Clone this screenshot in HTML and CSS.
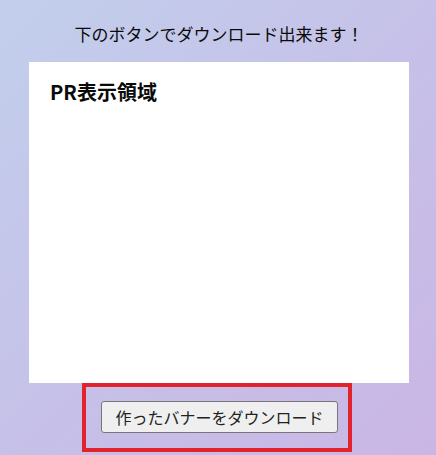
FILE: index.html
```html
<!DOCTYPE html>
<html lang="ja">
<head>
<meta charset="utf-8">
<link rel="stylesheet" href="styles.css">
</head>
<body>
<div class="page">
  <p class="title">下のボタンでダウンロード出来ます！</p>
  <div class="banner">
    <h2 class="banner-title">PR表示領域</h2>
  </div>
  <div class="highlight">
    <button class="download">作ったバナーをダウンロード</button>
  </div>
</div>
</body>
</html>
```
FILE: styles.css
```css
html, body {
  margin: 0;
  padding: 0;
  height: 100%;
}
body {
  background: linear-gradient(135deg, #c2cfec 0%, #c6c1e8 50%, #cab6e5 100%);
  font-family: "Noto Sans CJK JP", "Noto Sans", sans-serif;
  color: #111;
}
.page {
  display: flex;
  flex-direction: column;
  align-items: center;
  padding-top: 21px;
}
.title {
  margin: 0 0 15px 0;
  font-size: 17px;
  line-height: 26px;
  padding-left: 2px;
  color: #0a0a0a;
}
.banner {
  width: 380px;
  height: 321px;
  background: #fff;
  box-sizing: border-box;
  padding: 16px 21px;
  margin-left: 2px;
}
.banner-title {
  margin: 0;
  font-size: 20px;
  line-height: 28px;
  font-weight: bold;
  color: #0a0a0a;
}
.highlight {
  width: 270px;
  height: 69px;
  box-sizing: border-box;
  border: 4px solid #e2232e;
  padding: 14px 10px 0 15px;
  margin-right: 2px;
}
.download {
  width: 237px;
  height: 32px;
  box-sizing: border-box;
  padding: 0;
  font-family: "Noto Sans CJK JP", "Noto Sans", sans-serif;
  font-size: 16px;
  color: #222;
  background: #efefef;
  border: 1px solid #777;
  border-radius: 3px;
  line-height: 30px;
}
```
